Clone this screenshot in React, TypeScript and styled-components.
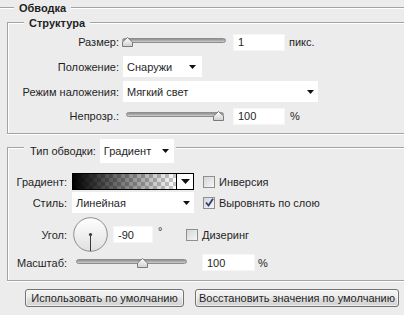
import React from "react";
import styled, { createGlobalStyle } from "styled-components";

const Global = createGlobalStyle`
  html, body { margin: 0; padding: 0; background: #ececec; }
  body { font-family: "Liberation Sans", Arial, sans-serif; font-size: 11px; color: #1f1f1f; }
  * { box-sizing: border-box; }
`;

const Panel = styled.div`
  width: 404px;
  height: 315px;
  overflow: hidden;
  background: #ececec;
  padding-top: 7px;
`;

const OuterGroup = styled.section`
  width: 440px;
  border-top: 1px solid #a3a3a3;
  box-shadow: inset 0 1px 0 #fff;
  padding-left: 7px;
`;

const Group = styled.section<{ $mt: number; $pb: number }>`
  margin-top: ${(p) => p.$mt}px;
  padding-bottom: ${(p) => p.$pb}px;
  border: 1px solid #a3a3a3;
  border-right: none;
  box-shadow: inset 1px 1px 0 #fff, 0 1px 0 #fff;
`;

const Legend = styled.div<{ $mt: number; $ml: number; $h: number; $bold?: boolean; $pr?: number }>`
  display: flex;
  align-items: center;
  gap: 4px;
  width: fit-content;
  height: ${(p) => p.$h}px;
  margin-top: ${(p) => p.$mt}px;
  margin-left: ${(p) => p.$ml}px;
  padding: 0 ${(p) => p.$pr ?? 5}px 0 ${(p) => (p.$bold ? 5 : 6)}px;
  background: #ececec;
  font-weight: ${(p) => (p.$bold ? "bold" : "normal")};
  white-space: nowrap;
`;

const Row = styled.div<{ $h: number; $mt: number }>`
  display: flex;
  align-items: center;
  height: ${(p) => p.$h}px;
  margin-top: ${(p) => p.$mt}px;
  white-space: nowrap;
`;

const FieldLabel = styled.span<{ $w: number }>`
  width: ${(p) => p.$w}px;
  flex-shrink: 0;
  text-align: right;
`;

const NumberField = styled.div<{ $w: number; $ml: number }>`
  display: flex;
  align-items: center;
  width: ${(p) => p.$w}px;
  height: 17px;
  margin-left: ${(p) => p.$ml}px;
  padding-left: 4px;
  background: #fff;
  border: 1px solid #f6f6f6;
  flex-shrink: 0;
`;

const Unit = styled.span<{ $ml: number; $w?: number; $raised?: boolean }>`
  margin-left: ${(p) => p.$ml}px;
  ${(p) => (p.$w ? `width: ${p.$w}px;` : "")}
  ${(p) => (p.$raised ? "align-self: flex-start; margin-top: 8px;" : "")}
  flex-shrink: 0;
`;

const SelectBox = styled.div<{ $w: number; $h: number; $ml: number; $pr?: number }>`
  display: flex;
  align-items: center;
  justify-content: space-between;
  width: ${(p) => p.$w}px;
  height: ${(p) => p.$h}px;
  margin-left: ${(p) => p.$ml}px;
  padding: 0 ${(p) => p.$pr ?? 5}px 0 4px;
  background: #fff;
  flex-shrink: 0;
`;

const SliderBox = styled.div<{ $w: number; $ml: number }>`
  position: relative;
  width: ${(p) => p.$w}px;
  height: 10px;
  margin-left: ${(p) => p.$ml}px;
  flex-shrink: 0;
`;

const Track = styled.div`
  height: 5px;
  margin-top: 1px;
  border-radius: 3px;
  border: 1px solid #8d8d8d;
  background: linear-gradient(#8f8f8f, #b3b3b3 60%, #cfcfcf);
`;

const ThumbSvg = styled.svg`
  position: absolute;
  top: 0;
`;

const GradientSwatch = styled.div<{ $w: number; $ml: number }>`
  display: flex;
  width: ${(p) => p.$w}px;
  height: 17px;
  margin-left: ${(p) => p.$ml}px;
  border: 1px solid #000;
  flex-shrink: 0;
`;

const GradientFill = styled.div`
  flex: 1;
  border-right: 1px solid #000;
  background-image: linear-gradient(to right, rgba(0, 0, 0, 1), rgba(0, 0, 0, 0)),
    conic-gradient(#c8c8c8 90deg, #ffffff 90deg 180deg, #c8c8c8 180deg 270deg, #ffffff 270deg);
  background-size: 100% 100%, 8px 8px;
`;

const GradientArrow = styled.div`
  display: flex;
  align-items: center;
  justify-content: center;
  width: 16px;
  background: #fff;
`;

const CheckItem = styled.label<{ $ml: number }>`
  display: flex;
  align-items: center;
  gap: 4px;
  margin-left: ${(p) => p.$ml}px;
`;

const CheckBox = styled.span`
  display: inline-flex;
  align-items: center;
  justify-content: center;
  width: 12px;
  height: 12px;
  border: 1px solid #8e8f8f;
  background: linear-gradient(135deg, #d6d6d6, #f6f6f6);
  flex-shrink: 0;
`;

const DialSvg = styled.svg<{ $ml: number }>`
  margin-left: ${(p) => p.$ml}px;
  flex-shrink: 0;
`;

const ButtonRow = styled.div`
  display: flex;
  gap: 11px;
  margin: 8px 0 0 18px;
`;

const Btn = styled.button<{ $w: number }>`
  width: ${(p) => p.$w}px;
  height: 18px;
  padding: 0;
  border: 1px solid #727272;
  border-radius: 3px;
  background: linear-gradient(#f4f4f4 0%, #ececec 45%, #dedede 55%, #d2d2d2 100%);
  box-shadow: inset 0 0 0 1px rgba(255, 255, 255, 0.6);
  font: inherit;
  color: #1f1f1f;
  white-space: nowrap;
`;

const Caret = ({ w = 7, h = 4 }: { w?: number; h?: number }) => (
  <svg width={w} height={h} viewBox={`0 0 ${w} ${h}`}>
    <path d={`M0 0H${w}L${w / 2} ${h}Z`} fill="#111" />
  </svg>
);

const Slider = ({ w, ml, value }: { w: number; ml: number; value: number }) => {
  const left = Math.max(0, Math.min(w - 11, value * w - 5.5));
  return (
    <SliderBox $w={w} $ml={ml}>
      <Track />
      <ThumbSvg width="11" height="10" viewBox="0 0 11 10" style={{ left }}>
        <defs>
          <linearGradient id="thumbg" x1="0" y1="0" x2="0" y2="1">
            <stop offset="0" stopColor="#ffffff" />
            <stop offset="1" stopColor="#cfcfcf" />
          </linearGradient>
        </defs>
        <path d="M5.5 0.5L10.5 5V9.5H0.5V5Z" fill="url(#thumbg)" stroke="#7b7b7b" strokeWidth="1" />
      </ThumbSvg>
    </SliderBox>
  );
};

const Check = ({ checked }: { checked?: boolean }) => (
  <CheckBox>
    {checked && (
      <svg width="9" height="9" viewBox="0 0 9 9">
        <path d="M1 4.5L3.5 7.5L8 0.8" fill="none" stroke="#2a3f7e" strokeWidth="1.8" />
      </svg>
    )}
  </CheckBox>
);

const Dial = () => (
  <DialSvg $ml={6} width="35" height="35" viewBox="0 0 35 35">
    <defs>
      <linearGradient id="dialg" x1="0" y1="0" x2="0" y2="1">
        <stop offset="0" stopColor="#ffffff" />
        <stop offset="1" stopColor="#e0e0e0" />
      </linearGradient>
    </defs>
    <circle cx="17.5" cy="17.5" r="16.8" fill="url(#dialg)" stroke="#8c8c8c" strokeWidth="1" />
    <line x1="17.5" y1="17.5" x2="17.5" y2="34" stroke="#3a3a3a" strokeWidth="1" />
    <circle cx="17.5" cy="17.5" r="1.6" fill="#3a3a3a" />
  </DialSvg>
);

export default function App() {
  return (
    <>
      <Global />
      <Panel>
        <OuterGroup>
          <Legend $mt={-7} $ml={7} $h={13} $bold>
            Обводка
          </Legend>

          <Group $mt={8} $pb={8}>
            <Legend $mt={-7} $ml={16} $h={13} $bold>
              Структура
            </Legend>

            <Row $h={18} $mt={4}>
              <FieldLabel $w={111}>Размер:</FieldLabel>
              <Slider w={104} ml={3} value={0} />
              <NumberField $w={52} $ml={7}>1</NumberField>
              <Unit $ml={4}>пикс.</Unit>
            </Row>
            <Row $h={21} $mt={5}>
              <FieldLabel $w={111}>Положение:</FieldLabel>
              <SelectBox $w={79} $h={21} $ml={4} $pr={6}>
                Снаружи
                <Caret />
              </SelectBox>
            </Row>
            <Row $h={21} $mt={4}>
              <FieldLabel $w={111}>Режим наложения:</FieldLabel>
              <SelectBox $w={195} $h={21} $ml={4} $pr={4}>
                Мягкий свет
                <Caret />
              </SelectBox>
            </Row>
            <Row $h={18} $mt={5}>
              <FieldLabel $w={111}>Непрозр.:</FieldLabel>
              <Slider w={98} ml={7} value={1} />
              <NumberField $w={52} $ml={9}>100</NumberField>
              <Unit $ml={5}>%</Unit>
            </Row>
          </Group>

          <Group $mt={13} $pb={9}>
            <Legend $mt={-9} $ml={16} $h={24} $pr={2}>
              Тип обводки:
              <SelectBox $w={74} $h={24} $ml={0} $pr={5}>
                Градиент
                <Caret />
              </SelectBox>
            </Legend>

            <Row $h={17} $mt={10}>
              <FieldLabel $w={59}>Градиент:</FieldLabel>
              <GradientSwatch $w={122} $ml={5}>
                <GradientFill />
                <GradientArrow>
                  <Caret w={9} h={5} />
                </GradientArrow>
              </GradientSwatch>
              <CheckItem $ml={9}>
                <Check />
                Инверсия
              </CheckItem>
            </Row>
            <Row $h={21} $mt={2}>
              <FieldLabel $w={59}>Стиль:</FieldLabel>
              <SelectBox $w={122} $h={21} $ml={5} $pr={4}>
                Линейная
                <Caret />
              </SelectBox>
              <CheckItem $ml={9}>
                <Check checked />
                Выровнять по слою
              </CheckItem>
            </Row>
            <Row $h={35} $mt={4}>
              <FieldLabel $w={59}>Угол:</FieldLabel>
              <Dial />
              <NumberField $w={40} $ml={5}>-90</NumberField>
              <Unit $ml={5} $w={4} $raised>
                °
              </Unit>
              <CheckItem $ml={24}>
                <Check />
                Дизеринг
              </CheckItem>
            </Row>
            <Row $h={17} $mt={2}>
              <FieldLabel $w={59}>Масштаб:</FieldLabel>
              <Slider w={111} ml={9} value={0.6} />
              <NumberField $w={53} $ml={15}>100</NumberField>
              <Unit $ml={3}>%</Unit>
            </Row>
          </Group>

          <ButtonRow>
            <Btn $w={159}>Использовать по умолчанию</Btn>
            <Btn $w={204}>Восстановить значения по умолчанию</Btn>
          </ButtonRow>
        </OuterGroup>
      </Panel>
    </>
  );
}
